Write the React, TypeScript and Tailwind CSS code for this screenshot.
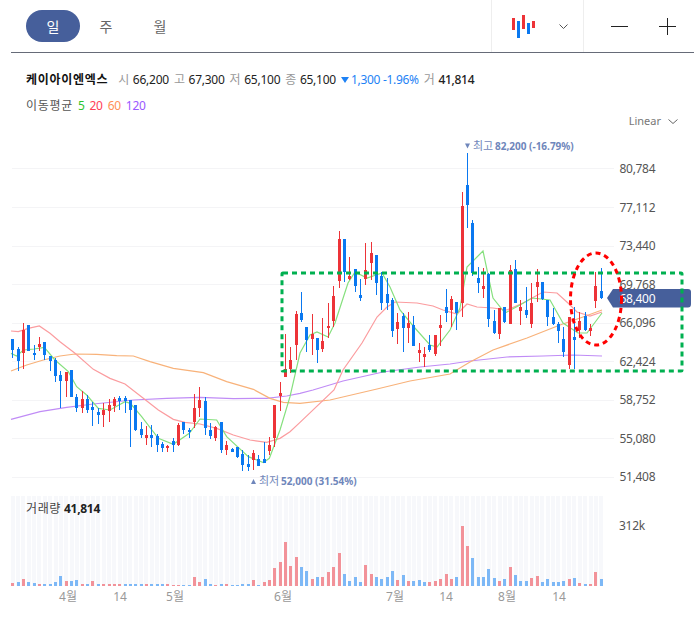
const X = (i: number) => 12.7 + 5.35 * i;
type C = [string, number, number, number, number];
// [colour, high, top, bottom, low] measured on 3x crops of the reference
const a: C[] = [
["b",87,87,120,145],["b",110,117,153,183],["r",40,60,128,178],["b",45,45,122,122],["b",105,129,133,150],["r",82,102,111,122],["b",96,96,135,150],["b",138,138,152,183],["b",145,150,197,215],["b",183,195,213,293],
["r",186,186,213,262],["b",180,180,262,262],["b",252,262,294,305],["r",243,267,293,308],["b",255,267,300,310],["b",277,291,300,347],["b",295,305,315,342],["r",278,300,315,350],["r",268,285,302,335],["r",262,267,288,305],
["b",258,264,273,300],["b",258,264,273,308],["b",270,270,300,410],["b",285,285,360,362],["b",335,357,375,385],["r",348,375,384,404],["b",345,375,384,410],["b",372,377,405,425],["b",395,402,414,425],["r",405,408,411,425],
["b",385,393,405,425],["r",340,345,405,408],["b",335,336,360,372],["b",355,360,363,385],["r",252,295,335,355],["r",230,270,294,320],["b",262,273,353,375],["b",340,360,378,388],["r",348,350,385,392],["b",336,336,420,430],
["r",393,405,420,435],["b",415,417,426,426],["b",410,411,440,445],["b",420,433,465,482],["b",435,462,471,482],["r",420,430,450,480],["b",435,447,467,468],["b",395,447,458,460],["r",380,405,423,435],["r",285,285,385,410],
["r",215,250,258,303],
];
const b: C[] = [
["r",343,447,470,470],["r",380,420,447,460],["r",273,282,375,420],["b",215,280,300,305],["b",320,322,360,395],["r",282,343,357,405],["b",355,355,390,430],["r",295,363,388,395],["r",248,318,321,355],["r",197,228,303,320],
["r",33,57,183,205],["b",57,57,157,185],["r",112,168,177,180],["b",148,148,197,215],["b",178,225,235,242],["r",68,150,178,195],["r",65,100,128,180],["b",105,105,188,225],["b",155,168,248,270],["b",175,222,250,270],
["b",235,240,333,352],["r",280,307,327,372],["b",280,288,323,395],["r",275,310,323,370],["b",288,315,377,378],["r",368,390,398,425],["r",380,402,410,442],["b",345,375,390,395],["r",345,345,402,408],["r",285,315,323,378],
["b",207,262,278,307],["r",228,237,270,322],["b",246,246,278,330],
];
const c: C[] = [
["r",187,228,520,562],["b",70,165,225,293],["b",270,278,430,438],["b",410,445,458,490],["r",415,468,477,505],["b",430,432,567,590],["b",540,572,608,612],["r",535,535,612,628],["b",530,532,575,580],["r",405,420,581,582],
["b",390,417,520,520],["r",510,532,543,585],["b",470,540,555,565],["r",458,518,582,595],["r",418,457,470,515],["b",455,457,507,510],["b",510,510,560,588],["b",535,562,582,585],["b",575,583,602,640],["b",590,628,665,680],
["r",560,560,705,718],["b",530,622,630,718],["r",545,573,600,625],["b",545,558,600,602],["r",582,595,602,618],["r",425,468,513,533],["b",413,483,503,507],
];
const conv = (arr: C[], off: number): C[] => arr.map(([k, h, t, bt, l]) => [k, off + h / 3, off + t / 3, off + bt / 3, off + l / 3]);
const candles: C[] = [...conv(a, 310), ...conv(b, 220), ...conv(c, 130)];

const vol: [string, number][] = [
["r",10],["b",11],["r",20],["b",11],["b",8],["r",5],["b",5],["b",5],["b",11],["b",29],["r",14],["b",14],["b",17],["r",5],["b",5],["r",14],["b",5],["r",5],["r",5],["r",5],
["r",5],["b",5],["b",7],["b",7],["b",5],["r",5],["b",5],["b",5],["b",5],["r",5],["r",2],["r",4],["b",2],["b",2],["r",26],["r",11],["b",20],["b",5],["r",2],["b",7],
["r",5],["b",2],["b",2],["b",7],["b",5],["r",17],["b",2],["r",11],["r",17],["r",53],["r",71],["r",131],["r",59],["r",86],["b",56],["b",44],["r",20],["b",26],["r",26],["r",41],
["r",56],["r",98],["b",35],["b",14],["b",26],["b",11],["r",62],["r",35],["b",26],["b",20],["b",26],["b",44],["r",17],["b",32],["r",14],["b",14],["b",17],["b",11],["r",11],["r",14],
["r",20],["r",35],["r",20],["b",26],["r",180],["r",120],["b",83],["b",26],["b",26],["b",50],["b",23],["r",14],["b",20],["r",56],["b",32],["b",14],["b",14],["r",23],["r",29],["b",11],
["b",20],["b",11],["b",11],["b",14],["r",20],["b",23],["r",8],["b",5],["r",5],["r",41],["b",20],
];

const z3 = (p: number[][]) => p.map(([x, y]) => `${x / 3},${310 + y / 3}`).join(" ");
const ma20 = z3([[33,63],[55,65],[85,55],[118,48],[150,70],[180,95],[225,130],[280,178],[330,205],[375,222],[430,265],[475,300],[520,328],[555,337],[600,342],[650,355],[700,375],[750,390],[800,397],[840,385],[870,365],[900,337]]) +
  " 334,390 343,370 362,343 377,317 387,307 395,302 417,303 433,306 443,310 457,314 467,304 477,307 493,308 507,310 523,303 543,292 557,293 568,303 577,312 590,316 602,312";
const ma60 = z3([[33,183],[80,165],[130,150],[180,138],[225,132],[290,133],[350,137],[400,138],[450,155],[520,175],[610,188],[680,215],[760,238],[810,265],[850,277],[900,280]]) +
  " 330,400 377,389 410,381 450,374 470,362 493,350 527,338 560,325 583,317 602,310";
const ma120 = z3([[33,328],[120,305],[200,292],[280,282],[400,270],[500,265],[600,262],[700,266],[800,265],[860,258],[900,250]]) +
  " 313,390 343,381 383,372 420,367 450,364 470,361 507,357 543,356 573,355 602,356";
const ma5 = z3([[33,130],[50,138],[70,120],[103,117],[133,112],[165,150],[205,185],[230,230],[260,255],[295,295],[330,300],[375,275],[391,280],[425,320],[475,385],[520,403],[568,370],[600,327],[650,330],[680,380],[745,440],[790,458],[808,445],[840,360],[870,260]]) +
  " 300,353 310,335 317,332 328,337 335,323 348,283 355,272 367,278 382,273 390,287 400,310 414,327 430,345 437,347 450,330 460,308 467,267 483,251 493,298 505,313 520,305 532,298 550,300 563,323 578,333 587,333 602,313";

const grid = [168, 207, 245.5, 284, 322.5, 361, 399.5, 438, 476.5];
const prices = ["80,784", "77,112", "73,440", "69,768", "66,096", "62,424", "58,752", "55,080", "51,408"];
const months: [string, number][] = [["4월",68],["14",120],["5월",175],["6월",283],["7월",395],["14",446],["8월",507],["14",559]];

function Chart() {
  return (
    <svg viewBox="0 130 694 495" className="block w-[694px] h-[495px]">
      {grid.map((y) => <rect key={y} x={12} y={Math.round(y)} width={602} height={1} fill="#f4f4f6" shapeRendering="crispEdges" />)}
      {prices.map((p, i) => <text key={p} x={619.5} y={grid[i] + 4.5} className="fill-[#555] text-[12px] tracking-[-0.3px]">{p}</text>)}

      <polyline points={ma120} fill="none" stroke="#c08cf6" strokeWidth={1.2} />
      <polyline points={ma60} fill="none" stroke="#f8b27a" strokeWidth={1.2} />
      <polyline points={ma20} fill="none" stroke="#fb9c9f" strokeWidth={1.2} />
      <polyline points={ma5} fill="none" stroke="#86e07e" strokeWidth={1.2} />

      {candles.map(([k, h, t, bt, l], i) => {
        const left = Math.round(X(i) - 1.5);
        const col = k === "r" ? "#ed3338" : "#0a78f0";
        return (
          <g key={i} fill={col} shapeRendering="crispEdges">
            <rect x={left + 1} y={h} width={1} height={Math.max(l - h, 1)} />
            <rect x={left} y={t} width={3} height={Math.max(bt - t, 2)} />
          </g>
        );
      })}

      <path d="M465 143.5H470L467.5 148.5Z" fill="#6f86bb" />
      <text x={473} y={150} className="fill-[#7187ba] text-[11px]">최고</text>
      <text x={495} y={150} className="fill-[#6f86bb] text-[10px] font-bold">82,200 (-16.79%)</text>
      <path d="M251 484L253.5 479L256 484Z" fill="#6f86bb" />
      <text x={259} y={485} className="fill-[#7187ba] text-[11px]">최저</text>
      <text x={281} y={485} className="fill-[#6f86bb] text-[10px] font-bold">52,000 (31.54%)</text>

      {candles.map((_, i) => <rect key={i} x={Math.round(X(i) - 2)} y={496} width={4} height={90} fill="#f7f8fb" shapeRendering="crispEdges" />)}
      {vol.map(([k, v], i) => {
        const h = Math.max(v / 3, 1);
        return <rect key={i} x={Math.round(X(i) - 1.5)} y={586 - h} width={3} height={h} fill={k === "r" ? "#f29299" : "#7db8f6"} shapeRendering="crispEdges" />;
      })}
      <text x={26} y={513} className="fill-[#444] text-[12px] tracking-[0.6px]">거래량</text>
      <text x={64} y={513} className="fill-[#222] text-[12px] font-bold tracking-[-0.3px]">41,814</text>
      <text x={619} y={530} className="fill-[#555] text-[12px] tracking-[-0.3px]">312k</text>
      {months.map(([m, x], i) => <text key={i} x={x} y={601} textAnchor="middle" className="fill-[#999] text-[12px]">{m}</text>)}

      <path d="M607 298 L613 289 H688 Q691 289 691 292 V304 Q691 307.5 688 307.5 H613 Z" fill="#465f9b" />
      <text x={619.5} y={303} className="fill-white text-[12px] tracking-[-0.3px]">68,400</text>

      <rect x={282} y={273} width={400} height={98} rx={1} fill="none" stroke="#00b050" strokeWidth={3} strokeDasharray="5 4" />
      <ellipse cx={596} cy={299} rx={25.5} ry={46} fill="none" stroke="#f00" strokeWidth={3} strokeDasharray="5 4" />
    </svg>
  );
}

function Stat({ l, v, strong }: { l: string; v: string; strong?: boolean }) {
  return (
    <span className="flex gap-[3px] mr-[5px]">
      <span className="text-[#999] tracking-[0.6px]">{l}</span>
      <span className={strong ? "text-[#222] font-medium tracking-[-0.3px]" : "text-[#222] tracking-[-0.25px]"}>{v}</span>
    </span>
  );
}

export default function App() {
  return (
    <div className="w-[694px] h-[625px] overflow-hidden bg-white font-['Noto_Sans','Noto_Sans_CJK_KR',sans-serif] text-[12px]">
      <header className="ml-[11px] h-[53px] flex border-b border-[#666b78]">
        <div className="flex items-center pl-[15px] flex-1 text-[14px]">
          <button className="w-[54px] h-[32px] rounded-full bg-[#465f9b] text-white">일</button>
          <button className="w-[52px] h-[32px] text-[#666]">주</button>
          <button className="w-[56px] h-[32px] text-[#666]">월</button>
        </div>
        <div className="w-[92px] border-l border-[#eeeeee] flex items-center pl-[20px] gap-[23px]">
          <svg width="24" height="24" viewBox="0 0 24 24" shapeRendering="crispEdges">
            <rect x="0" y="4" width="3" height="12" fill="#ed3338" />
            <rect x="5" y="7" width="3" height="17" fill="#0a78f0" />
            <rect x="10" y="1" width="3" height="14" fill="#ed3338" />
            <rect x="15" y="9" width="3" height="11" fill="#0a78f0" />
            <rect x="20" y="7" width="3" height="7" fill="#ed3338" />
          </svg>
          <svg width="9" height="5" viewBox="0 0 9 5" fill="none" stroke="#555"><path d="M.5.5 4.5 4.5 8.5.5" /></svg>
        </div>
        <div className="w-[111px] border-l border-[#eeeeee] flex items-center pl-[27px] gap-[31px]">
          <svg width="17" height="17" viewBox="0 0 17 17" stroke="#222"><path d="M0 8.5H17" /></svg>
          <svg width="17" height="17" viewBox="0 0 17 17" stroke="#222"><path d="M0 8.5H17M8.5 0V17" /></svg>
        </div>
      </header>
      <div className="h-[19px] mt-[17px] ml-[26px] flex items-center">
        <span className="font-bold text-[#111] mr-[10px] tracking-[0.7px]">케이아이엔엑스</span>
        <Stat l="시" v="66,200" />
        <Stat l="고" v="67,300" />
        <Stat l="저" v="65,100" />
        <Stat l="종" v="65,100" />
        <span className="text-[#1e82f5] mr-[5px] flex items-center gap-[2px] tracking-[-0.3px]">
          <svg width="8" height="6" viewBox="0 0 8 6" fill="#1e82f5"><path d="M0 0H8L4 6Z" /></svg>
          1,300 -1.96%
        </span>
        <Stat l="거" v="41,814" strong />
      </div>
      <div className="h-[16px] mt-[9px] ml-[26px] flex items-center gap-[5px]">
        <span className="text-[#555] tracking-[0.7px]">이동평균</span>
        <span className="text-[#2ec52e] tracking-[-0.3px]">5</span>
        <span className="text-[#ff4058] tracking-[-0.3px]">20</span>
        <span className="text-[#ff9058] tracking-[-0.3px]">60</span>
        <span className="text-[#9a58ff] tracking-[-0.3px]">120</span>
      </div>
      <div className="h-[14px] pr-[16px] flex items-center justify-end gap-[7px] text-[#777] text-[11px] mb-[2px]">
        <span>Linear</span>
        <svg width="10" height="5" viewBox="0 0 10 5" fill="none" stroke="#666"><path d="M.5.5 5 4.5 9.5.5" /></svg>
      </div>
      <Chart />
    </div>
  );
}
